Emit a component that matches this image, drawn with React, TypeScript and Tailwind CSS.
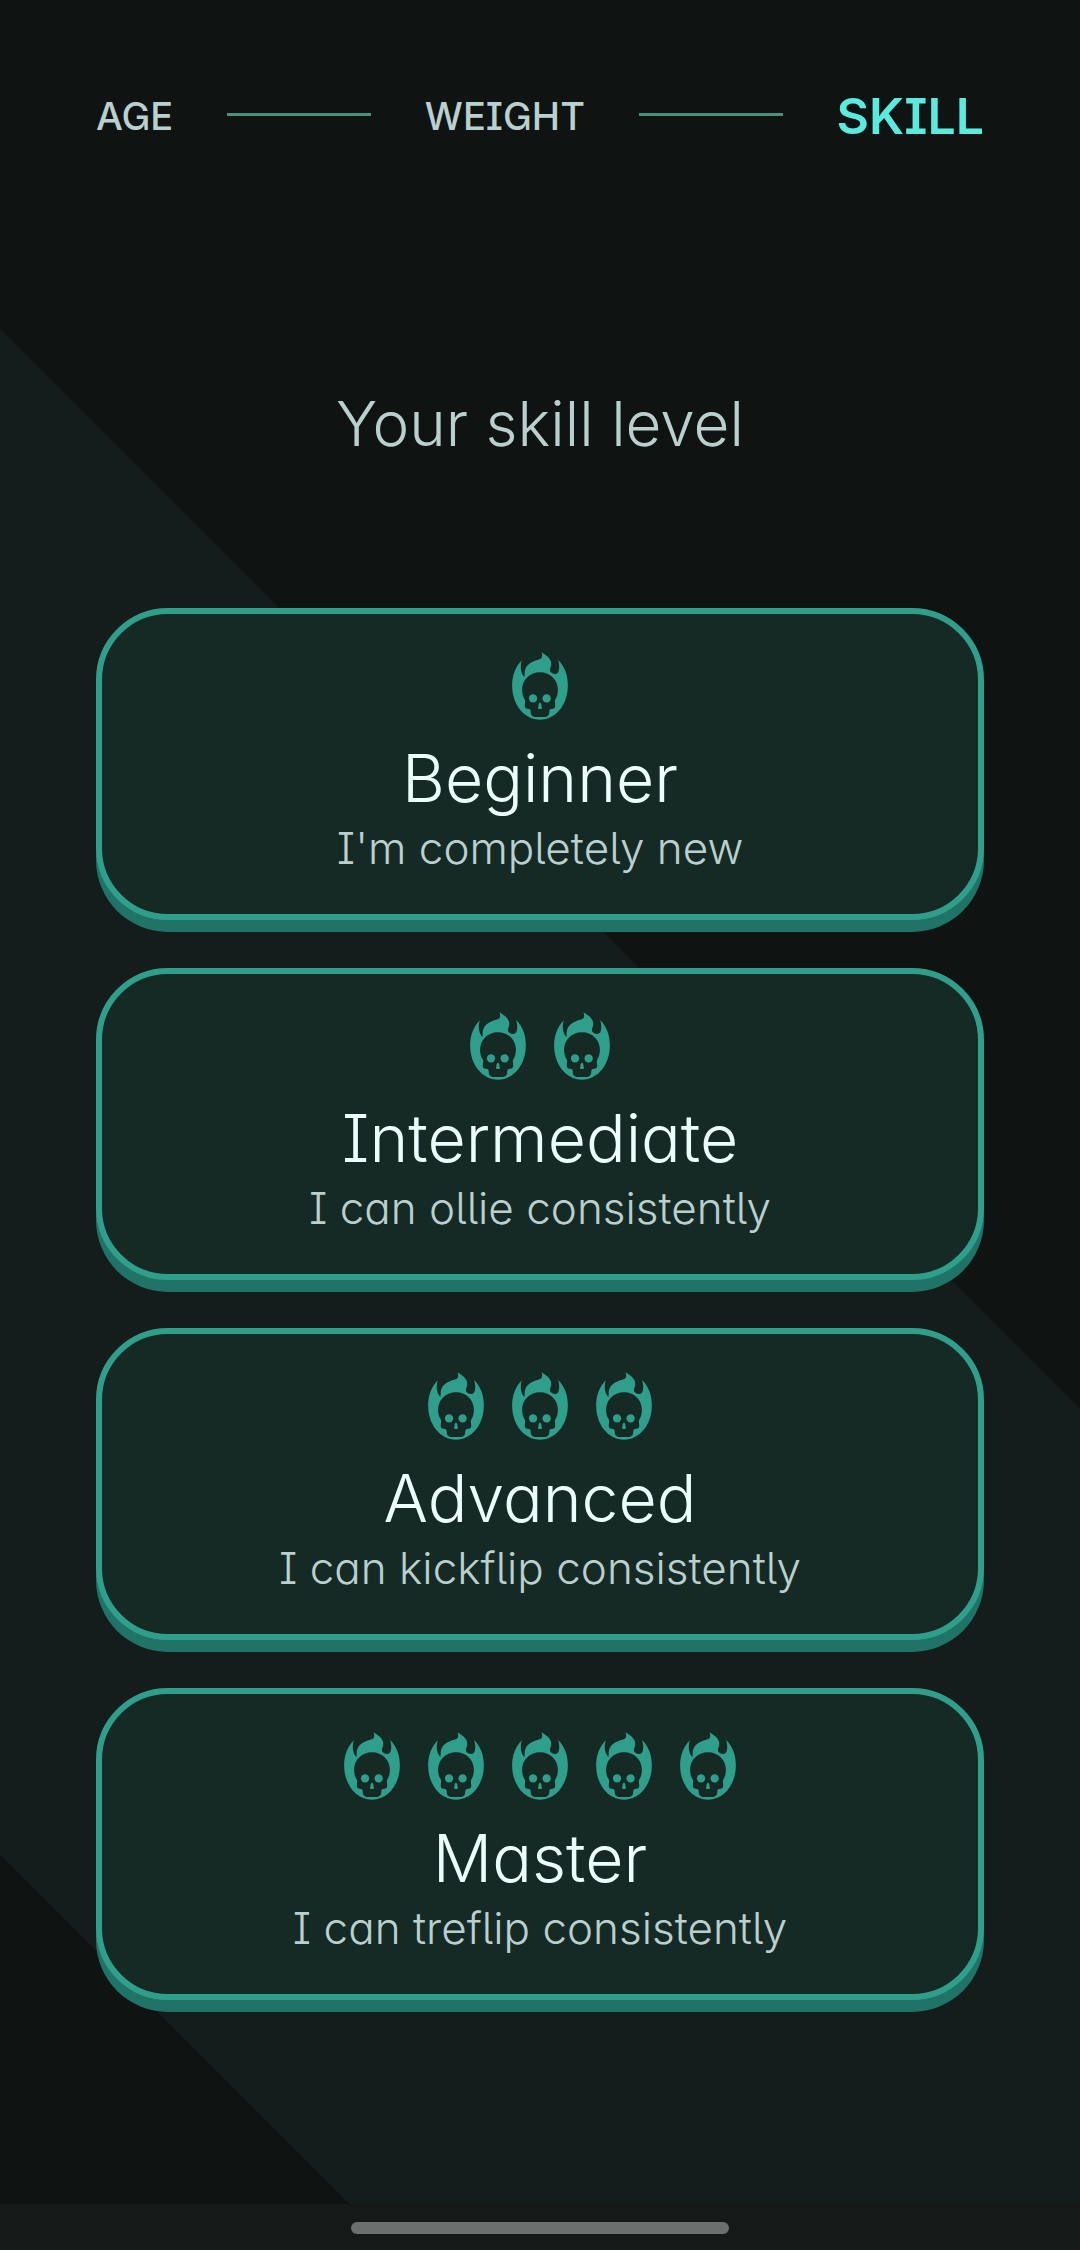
const steps = ["AGE", "WEIGHT"];

const levels = [
  { name: "Beginner", description: "I'm completely new", skulls: 1 },
  { name: "Intermediate", description: "I can ollie consistently", skulls: 2 },
  { name: "Advanced", description: "I can kickflip consistently", skulls: 3 },
  { name: "Master", description: "I can treflip consistently", skulls: 5 },
];

function FlamingSkull() {
  return (
    <svg viewBox="69 36 168 205" className="h-[68px] w-14" aria-hidden="true">
      <path
        fill="#2f9f8b"
        d="M98 61C80 80 69 105 69 137C69 195 106 240 153 240C200 240 237 195 237 137C237 105 227 80 208 60C212 74 212 88 208 97C203 105 189 104 184 95C180 86 190 79 186 65C182 52 170 45 157 37C161 46 161 55 152 58C135 63 118 69 110 84C105 94 108 102 106 112C95 100 92 80 98 61Z"
      />
      <path
        fill="#162a25"
        d="M153 97C121 97 99 121 99 150C99 162 102 172 107 179C110 184 107 190 107 197C107 203 110 207 116 207C122 207 125 209 125 215C125 225 129 231 140 232L166 232C177 231 181 225 181 215C181 209 184 207 190 207C196 207 199 203 199 197C199 190 196 184 199 179C204 172 207 162 207 150C207 121 185 97 153 97Z"
      />
      <g fill="#2f9f8b">
        <circle cx="132" cy="176" r="12.5" />
        <circle cx="173" cy="176" r="12.5" />
        <path d="M153 189C148 190 149 199 147 205C147 209 159 209 159 205C157 199 158 190 153 189Z" />
      </g>
    </svg>
  );
}

export default function App() {
  return (
    <div className="flex min-h-screen flex-col bg-[linear-gradient(225deg,#0f1312_996px,#151d1c_996px,#151d1c_2075px,#0f1312_2075px)] font-['Inter',sans-serif] text-[#b9d0ce]">
      <main className="flex flex-1 flex-col px-24 pt-[82px] pb-12">
        <nav
          aria-label="Steps"
          className="flex h-16 items-center justify-between [font-feature-settings:'cv08','cv10']"
        >
          {steps.map((step) => (
            <div key={step} className="contents">
              <button type="button" className="pt-1 text-[38px] leading-14 font-medium">
                {step}
              </button>
              <span className="h-[3px] w-36 bg-[#46917f]" />
            </div>
          ))}
          <button
            type="button"
            aria-current="step"
            className="pt-1 text-[50px] leading-14 font-semibold text-[#5aeade]"
          >
            SKILL
          </button>
        </nav>

        <h1 className="mt-[238px] text-center text-[62px] leading-20 font-light">
          Your skill level
        </h1>

        <div className="mt-36 flex flex-col gap-12 [font-feature-settings:'cv05','cv08','cv11']">
          {levels.map((level) => (
            <button
              key={level.name}
              type="button"
              className="flex h-[312px] flex-col items-center rounded-[72px] border-6 border-[#2f9f8b] bg-[#162a25] pt-[38px] shadow-[0_12px_0_#1f7467]"
            >
              <span className="flex gap-7">
                {Array.from({ length: level.skulls }, (_, i) => (
                  <FlamingSkull key={i} />
                ))}
              </span>
              <span className="mt-[18px] text-[66px] leading-20 font-light text-[#edfffd]">
                {level.name}
              </span>
              <span className="text-[44px] leading-15 font-light">
                {level.description}
              </span>
            </button>
          ))}
        </div>
      </main>

      <footer className="flex h-[46px] justify-center bg-[#151a19] pt-[18px]">
        <div className="h-3 w-[378px] rounded-full bg-[#6b6f6e]" />
      </footer>
    </div>
  );
}
